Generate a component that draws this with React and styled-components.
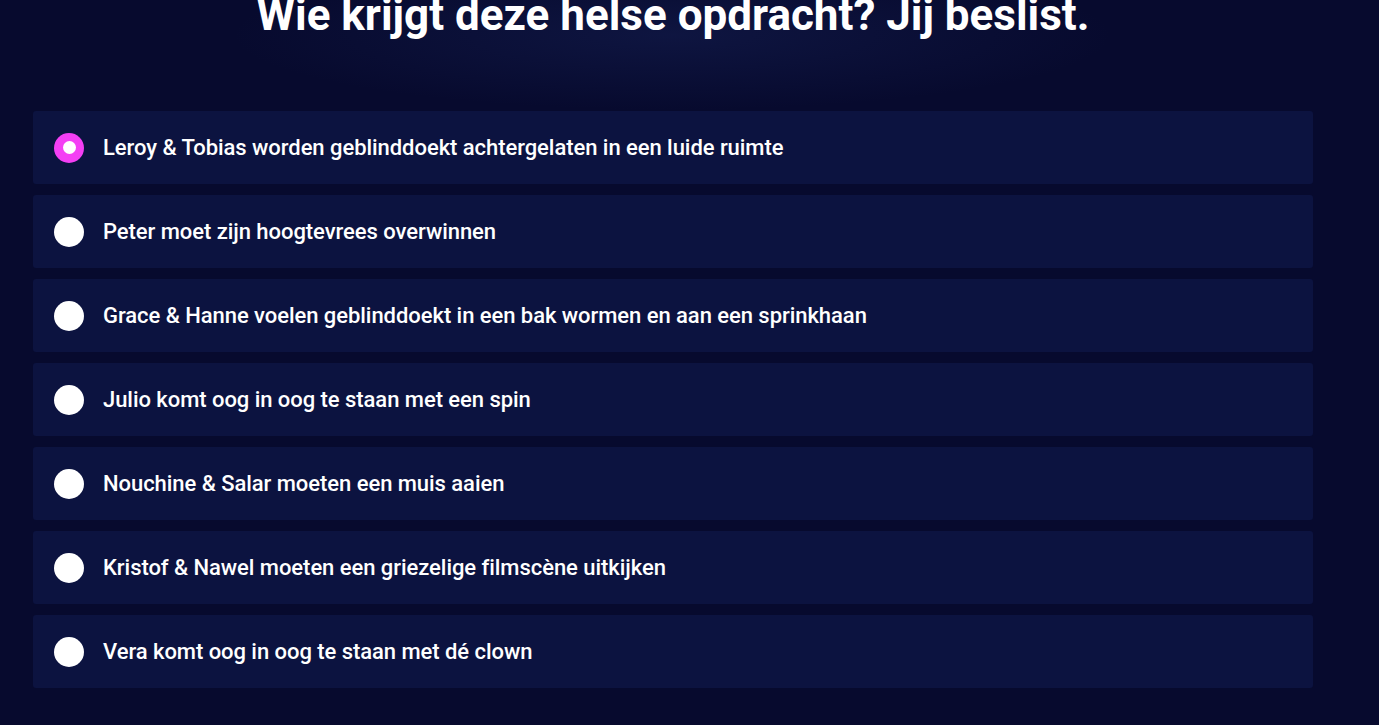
import React, { useState } from "react";
import styled, { createGlobalStyle } from "styled-components";

const Global = createGlobalStyle`
  html, body { margin: 0; padding: 0; background: #070a2e; }
  body { font-family: Roboto, "Noto Sans", sans-serif; overflow: hidden; }
`;

const Page = styled.div`
  min-height: 725px;
  background:
    radial-gradient(ellipse 440px 75px at 672px 35px, rgba(40, 60, 130, 0.22), rgba(7, 10, 46, 0) 100%),
    #070a2e;
  padding: 0 66px 0 33px;
  box-sizing: border-box;
`;

const Container = styled.div`
  width: 1280px;
  display: flex;
  flex-direction: column;
`;

const Title = styled.h1`
  margin: -7px 0 0;
  height: 118px;
  font-family: Roboto, sans-serif;
  font-weight: 700;
  font-size: 44px;
  line-height: 44px;
  letter-spacing: 0;
  color: #ffffff;
  text-align: center;
`;

const List = styled.div`
  display: flex;
  flex-direction: column;
  gap: 11px;
`;

const Option = styled.label`
  display: flex;
  align-items: center;
  gap: 19px;
  height: 73px;
  padding: 0 21px;
  background: #0c1340;
  border-radius: 3px;
  cursor: pointer;
`;

const Radio = styled.span`
  width: 30px;
  height: 30px;
  border-radius: 50%;
  background: ${(p) => (p.$checked ? "#f43ff4" : "#ffffff")};
  display: flex;
  align-items: center;
  justify-content: center;
  flex: none;
  &::after {
    content: "";
    width: 13px;
    height: 13px;
    border-radius: 50%;
    background: #ffffff;
    display: ${(p) => (p.$checked ? "block" : "none")};
  }
`;

const Label = styled.span`
  font-family: Roboto, sans-serif;
  font-weight: 500;
  font-size: 22px;
  letter-spacing: -0.05px;
  color: #ffffff;
`;

const options = [
  "Leroy & Tobias worden geblinddoekt achtergelaten in een luide ruimte",
  "Peter moet zijn hoogtevrees overwinnen",
  "Grace & Hanne voelen geblinddoekt in een bak wormen en aan een sprinkhaan",
  "Julio komt oog in oog te staan met een spin",
  "Nouchine & Salar moeten een muis aaien",
  "Kristof & Nawel moeten een griezelige filmscène uitkijken",
  "Vera komt oog in oog te staan met dé clown",
];

export default function App() {
  const [sel, setSel] = useState(0);
  return (
    <>
      <Global />
      <Page>
        <Container>
          <Title>Wie krijgt deze helse opdracht? Jij beslist.</Title>
          <List>
            {options.map((o, i) => (
              <Option key={i} onClick={() => setSel(i)}>
                <Radio $checked={sel === i} />
                <Label>{o}</Label>
              </Option>
            ))}
          </List>
        </Container>
      </Page>
    </>
  );
}
